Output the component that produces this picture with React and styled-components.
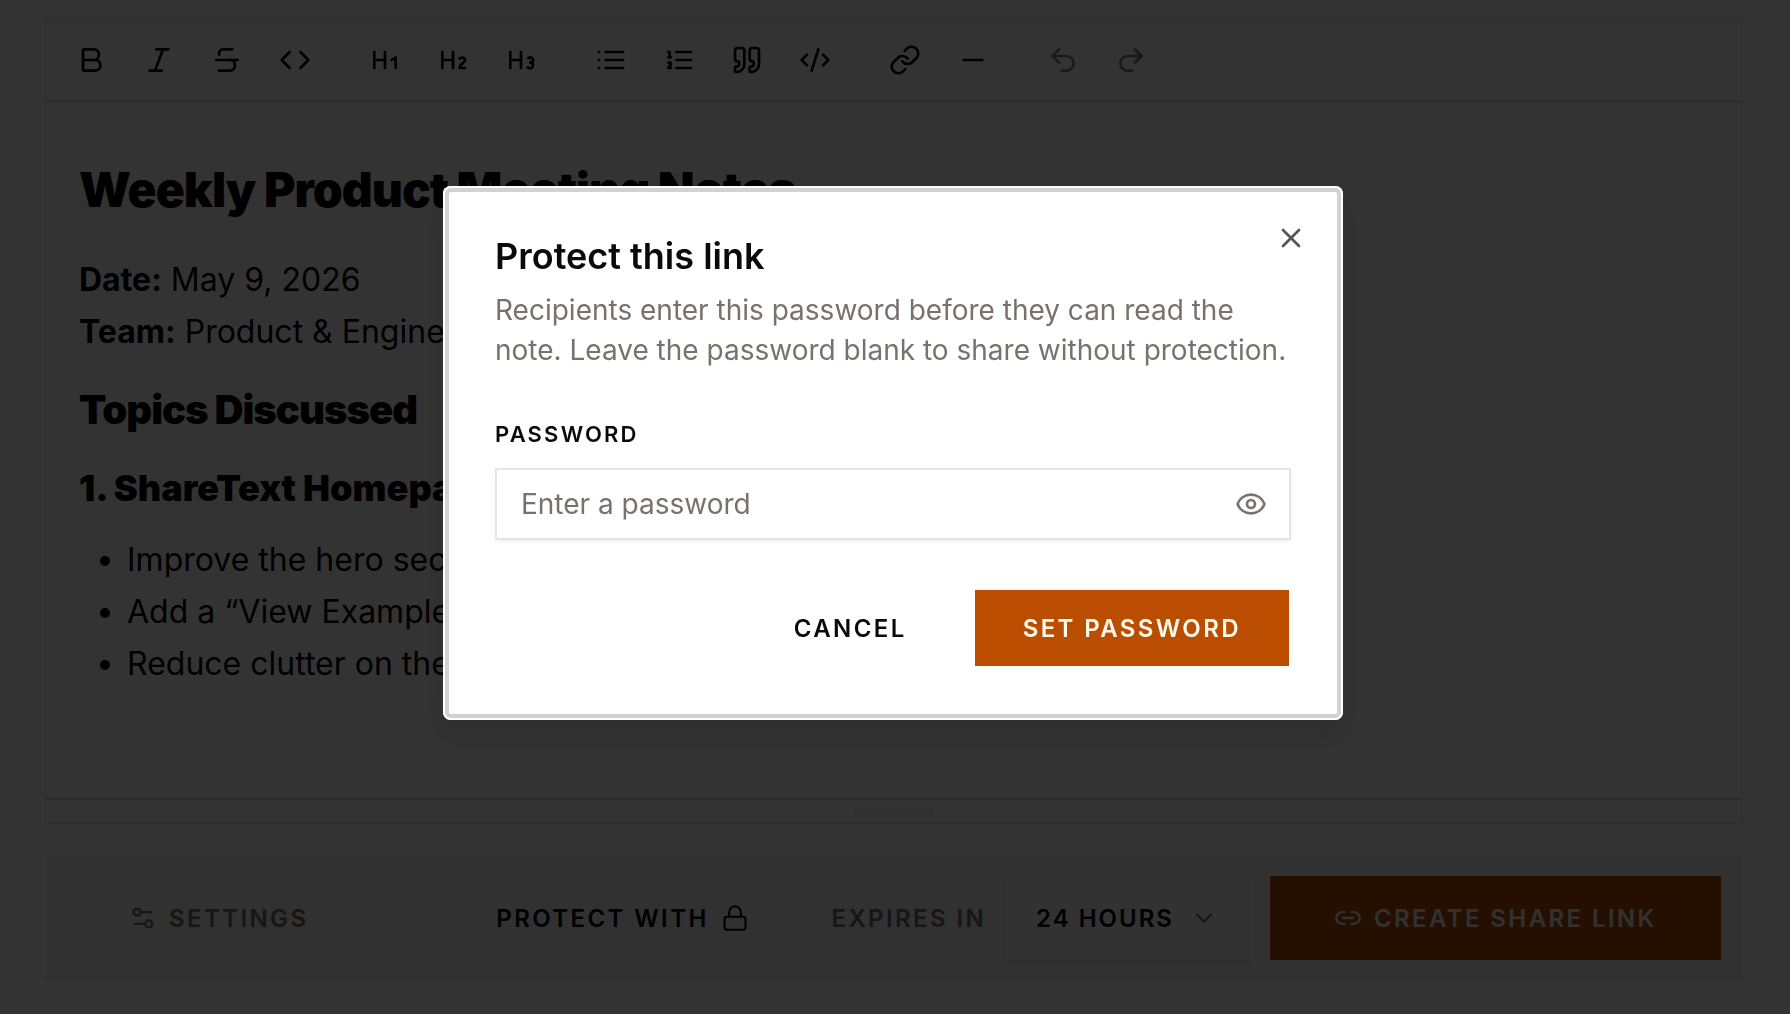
import React, { useState } from 'react'
import styled, { createGlobalStyle } from 'styled-components'
import {
  Bold,
  Italic,
  Strikethrough,
  Code,
  Heading1,
  Heading2,
  Heading3,
  Quote,
  CodeXml,
  Link,
  Link2,
  Minus,
  Undo2,
  Redo2,
  Settings2,
  Lock,
  ChevronDown,
  Eye,
  EyeOff,
  X,
} from 'lucide-react'

const BulletList = ({ size }) => (
  <svg width={size} height={size} viewBox="0 0 24 24" fill="none" stroke="currentColor" strokeWidth="2" strokeLinecap="round">
    <path d="M8 6h13M8 12h13M8 18h13M3 6h.01M3 12h.01M3 18h.01" />
  </svg>
)

const NumberedList = ({ size }) => (
  <svg width={size} height={size} viewBox="0 0 24 24" fill="none" stroke="currentColor" strokeWidth="2" strokeLinecap="round" strokeLinejoin="round">
    <path d="M10 6h11M10 12h11M10 18h11M4 6h1v4M4 10h2M6 18H4c0-1 2-2 2-3s-1-1.5-2-1" />
  </svg>
)

const toolGroups = [
  [
    { name: 'Bold', icon: Bold },
    { name: 'Italic', icon: Italic },
    { name: 'Strikethrough', icon: Strikethrough },
    { name: 'Inline code', icon: Code },
  ],
  [
    { name: 'Heading 1', icon: Heading1 },
    { name: 'Heading 2', icon: Heading2 },
    { name: 'Heading 3', icon: Heading3 },
  ],
  [
    { name: 'Bullet list', icon: BulletList },
    { name: 'Numbered list', icon: NumberedList },
    { name: 'Quote', icon: Quote },
    { name: 'Code block', icon: CodeXml },
  ],
  [
    { name: 'Link', icon: Link },
    { name: 'Divider', icon: Minus },
  ],
  [
    { name: 'Undo', icon: Undo2, disabled: true },
    { name: 'Redo', icon: Redo2, disabled: true },
  ],
]

function Editor() {
  return (
    <EditorFrame>
      <Toolbar>
        {toolGroups.map((group) => (
          <ToolGroup key={group[0].name}>
            {group.map(({ name, icon: Icon, disabled }) => (
              <ToolButton key={name} type="button" aria-label={name} disabled={disabled}>
                <Icon size={32} />
              </ToolButton>
            ))}
          </ToolGroup>
        ))}
      </Toolbar>
      <Document>
        <NoteTitle>Weekly Product Meeting Notes</NoteTitle>
        <NoteText>
          <strong>Date:</strong> May 9, 2026
          <br />
          <strong>Team:</strong> Product &amp; Engineering
        </NoteText>
        <NoteHeading>Topics Discussed</NoteHeading>
        <NoteSubheading>1. ShareText Homepage</NoteSubheading>
        <NoteList>
          <li>Improve the hero section</li>
          <li>Add a “View Example” button</li>
          <li>Reduce clutter on the page</li>
        </NoteList>
      </Document>
      <ResizeBar>
        <ResizeHandle />
      </ResizeBar>
    </EditorFrame>
  )
}

function ShareBar() {
  return (
    <ShareBarContainer>
      <SettingsButton type="button">
        <Settings2 size={28} />
        Settings
      </SettingsButton>
      <ProtectButton type="button">
        Protect with
        <Lock size={28} strokeWidth={1.75} />
      </ProtectButton>
      <Expiry>
        <ExpiryLabel htmlFor="expires">Expires in</ExpiryLabel>
        <SelectBox>
          <Select id="expires" defaultValue="24">
            <option value="24">24 HOURS</option>
            <option value="168">7 DAYS</option>
          </Select>
          <ChevronDown size={28} />
        </SelectBox>
      </Expiry>
      <CreateButton type="button">
        <Link2 size={28} />
        Create share link
      </CreateButton>
    </ShareBarContainer>
  )
}

function PasswordDialog() {
  const [password, setPassword] = useState('')
  const [visible, setVisible] = useState(false)

  return (
    <Overlay>
      <Dialog role="dialog" aria-modal="true" aria-labelledby="dialog-title">
        <CloseButton type="button" aria-label="Close">
          <X size={32} />
        </CloseButton>
        <DialogTitle id="dialog-title">Protect this link</DialogTitle>
        <DialogText>
          Recipients enter this password before they can read the note. Leave the password blank to share without protection.
        </DialogText>
        <FieldLabel htmlFor="password">Password</FieldLabel>
        <Field>
          <FieldInput
            id="password"
            type={visible ? 'text' : 'password'}
            placeholder="Enter a password"
            value={password}
            onChange={(e) => setPassword(e.target.value)}
          />
          <EyeButton type="button" aria-label="Show password" onClick={() => setVisible(!visible)}>
            {visible ? <EyeOff size={32} /> : <Eye size={32} />}
          </EyeButton>
        </Field>
        <DialogActions>
          <DialogButton type="button">Cancel</DialogButton>
          <DialogButton type="button" $primary>Set password</DialogButton>
        </DialogActions>
      </Dialog>
    </Overlay>
  )
}

function App() {
  return (
    <>
      <GlobalStyle />
      <Page>
        <Editor />
        <ShareBar />
      </Page>
      <PasswordDialog />
    </>
  )
}

const GlobalStyle = createGlobalStyle`
  * {
    box-sizing: border-box;
  }
  body {
    margin: 0;
    background: #fff;
    color: #0a0a0a;
    font-family: Inter, "Liberation Sans", sans-serif;
  }
  button, input, select {
    font-family: inherit;
    color: inherit;
    background: none;
    border: 0;
    padding: 0;
  }
  svg {
    flex-shrink: 0;
  }
`
const Page = styled.main`
  display: flex;
  flex-direction: column;
  gap: 32px;
  padding: 18px 47px 32px 45px;
  color: #000;
`
const EditorFrame = styled.section`
  border: 2px solid #efeeed;
`
const Toolbar = styled.div`
  display: flex;
  flex-wrap: wrap;
  gap: 26px;
  padding: 8px 12px;
  border-bottom: 2px solid #dcdad9;
`
const ToolGroup = styled.div`
  display: flex;
  gap: 4px;
`
const ToolButton = styled.button`
  display: flex;
  align-items: center;
  justify-content: center;
  width: 64px;
  height: 64px;

  &:disabled {
    opacity: 0.5;
  }
`
const Document = styled.article`
  min-height: 696px;
  padding: 60px 32px;
  font-size: 32px;
  line-height: 52px;
`
const NoteTitle = styled.h1`
  margin: 0 0 36px;
  font-size: 48px;
  line-height: 56px;
  font-weight: 900;
  letter-spacing: -1px;
`
const NoteText = styled.p`
  margin: 0 0 28px;

  strong {
    font-weight: 700;
  }
`
const NoteHeading = styled.h2`
  margin: 0 0 32px;
  font-size: 40px;
  line-height: 48px;
  font-weight: 900;
  letter-spacing: -1px;
`
const NoteSubheading = styled.h3`
  margin: 0 0 24px;
  font-size: 36px;
  line-height: 44px;
  font-weight: 900;
`
const NoteList = styled.ul`
  margin: 0;
  padding-left: 48px;
`
const ResizeBar = styled.div`
  display: flex;
  align-items: center;
  justify-content: center;
  height: 24px;
  border-top: 2px solid #dcdad9;
`
const ResizeHandle = styled.div`
  width: 80px;
  height: 4px;
  border-radius: 2px;
  background: #efeeed;
`
const ShareBarContainer = styled.section`
  display: grid;
  grid-template-columns: 415fr 319fr 422fr 451fr;
  gap: 16px;
  align-items: center;
  padding: 20px 22px 20px 20px;
  background: #f5f5f4;
  font-size: 24px;
  font-weight: 600;
  letter-spacing: 0.1em;
  text-transform: uppercase;
`
const BarButton = styled.button`
  display: flex;
  align-items: center;
  height: 84px;
  gap: 12px;
  font: inherit;
  letter-spacing: inherit;
  text-transform: inherit;
  white-space: nowrap;
`
const SettingsButton = styled(BarButton)`
  padding-left: 64px;
  color: #78716c;
`
const ProtectButton = styled(BarButton)``

const CreateButton = styled(BarButton)`
  justify-content: center;
  background: #bb4d00;
  color: #f5f5f4;
`
const Expiry = styled.div`
  display: flex;
  align-items: center;
  gap: 20px;
`
const ExpiryLabel = styled.label`
  color: #78716c;
  white-space: nowrap;
`
const SelectBox = styled.div`
  display: flex;
  align-items: center;
  flex: 1;
  height: 84px;
  background: #fafaf9;
  box-shadow: 0 2px 4px rgba(0, 0, 0, 0.1);

  svg {
    margin-left: -64px;
    pointer-events: none;
    color: #78716c;
  }
`
const Select = styled.select`
  appearance: none;
  width: 100%;
  height: 100%;
  padding: 0 64px 0 30px;
  font: inherit;
  letter-spacing: 2px;
`
const Overlay = styled.div`
  position: fixed;
  inset: 0;
  display: flex;
  align-items: flex-start;
  justify-content: center;
  padding: 186px 24px 24px 20px;
  background: rgba(0, 0, 0, 0.8);
`
const Dialog = styled.div`
  position: relative;
  width: 100%;
  max-width: 900px;
  padding: 52px 52px 54px;
  border-radius: 8px;
  background: #fff;
  box-shadow: inset 0 0 0 2px #fff, inset 0 0 0 6px #d4d2d1, 0 16px 32px rgba(0, 0, 0, 0.1);
`
const CloseButton = styled.button`
  position: absolute;
  top: 36px;
  right: 36px;
  display: flex;
  color: #545454;
`
const DialogTitle = styled.h2`
  margin: 0 0 16px;
  font-size: 36px;
  line-height: 36px;
  font-weight: 600;
`
const DialogText = styled.p`
  margin: 0 0 52px;
  font-size: 28px;
  line-height: 40px;
  color: #79716b;
`
const FieldLabel = styled.label`
  display: block;
  margin-bottom: 22px;
  font-size: 22px;
  line-height: 24px;
  font-weight: 600;
  letter-spacing: 0.1em;
  text-transform: uppercase;
`
const Field = styled.div`
  display: flex;
  align-items: center;
  height: 72px;
  padding: 0 22px 0 24px;
  border: 2px solid #e5e5e5;
  box-shadow: 0 2px 4px rgba(0, 0, 0, 0.05);
`
const FieldInput = styled.input`
  flex: 1;
  min-width: 0;
  height: 100%;
  font-size: 28px;
  outline: none;

  &::placeholder {
    color: #79716b;
    opacity: 1;
  }
`
const EyeButton = styled.button`
  display: flex;
  color: #79716b;
`
const DialogActions = styled.div`
  display: flex;
  justify-content: flex-end;
  gap: 20px;
  margin-top: 50px;
  padding-right: 2px;
`
const DialogButton = styled.button`
  height: 76px;
  padding: 0 48px;
  font-size: 24px;
  font-weight: 600;
  letter-spacing: 0.1em;
  text-transform: uppercase;
  background: ${(props) => (props.$primary ? '#bb4d00' : 'transparent')};
  color: ${(props) => (props.$primary ? '#fffbeb' : '#0a0a0a')};
`

export default App
